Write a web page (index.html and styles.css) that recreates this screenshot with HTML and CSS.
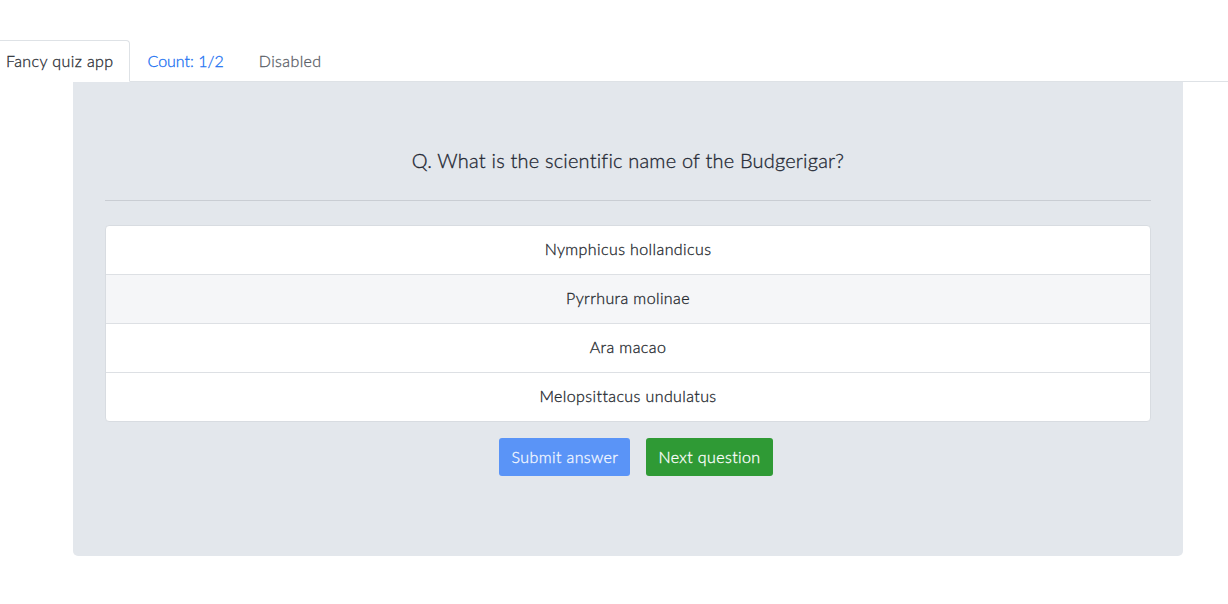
FILE: index.html
```html
<!DOCTYPE html>
<html>
<head>
<meta charset="utf-8">
<link rel="stylesheet" href="styles.css">
</head>
<body>
<ul class="tabs">
  <li class="tab active">Fancy quiz app</li>
  <li class="tab link">Count: 1/2</li>
  <li class="tab disabled">Disabled</li>
</ul>
<div class="jumbo">
  <h2 class="question">Q. What is the scientific name of the Budgerigar?</h2>
  <hr class="rule">
  <ul class="answers">
    <li class="answer">Nymphicus hollandicus</li>
    <li class="answer hover">Pyrrhura molinae</li>
    <li class="answer">Ara macao</li>
    <li class="answer">Melopsittacus undulatus</li>
  </ul>
  <div class="actions">
    <button class="btn btn-submit">Submit answer</button>
    <button class="btn btn-next">Next question</button>
  </div>
</div>
</body>
</html>
```

FILE: styles.css
```css
* { box-sizing: border-box; }
body {
  margin: 0;
  padding-top: 40px;
  font-family: Lato, "Open Sans", sans-serif;
  font-size: 16px;
  font-weight: 300;
  letter-spacing: 0.4px;
  -webkit-text-stroke: 0.3px currentColor;
  color: #212529;
  background: #fff;
}
.tabs {
  list-style: none;
  margin: 0 0 0 -11px;
  padding: 0;
  display: flex;
  border-bottom: 1px solid #dee2e6;
}
.tab {
  padding: 8px 16px;
  line-height: 24px;
  border: 1px solid transparent;
  border-top-left-radius: 4px;
  border-top-right-radius: 4px;
  margin-bottom: -1px;
}
.tab.active {
  color: #2a2e34;
  background: #fff;
  border-color: #dee2e6 #dee2e6 #fff;
}
.tab.link { color: #1a70f2; letter-spacing: 0; padding-right: 17px; }
.tab.disabled { color: #5a6067; }
.jumbo {
  margin-left: 73px;
  width: 1110px;
  background: #e3e7ec;
  border-radius: 0 0 5px 5px;
  padding: 64px 32px 80px;
}
.question {
  margin: 0;
  text-align: center;
  font-weight: 300;
  font-size: 20px;
  letter-spacing: 0.2px;
  line-height: 28px;
  padding-bottom: 2px;
  color: #1f2733;
}
.rule {
  margin: 24px 0;
  border: 0;
  border-top: 1px solid #c9cdd3;
}
.answers {
  list-style: none;
  margin: 0;
  padding: 0;
  background: #fff;
  border: 1px solid #d8dce1;
  border-radius: 4px;
}
.answer {
  text-align: center;
  padding: 11px 16px 13px;
  line-height: 24px;
  color: #24282e;
  border-top: 1px solid #dde0e4;
}
.answer:first-child { border-top: 0; }
.answer.hover { background: #f5f6f8; }
.actions {
  display: flex;
  justify-content: center;
  gap: 16px;
  margin-top: 16px;
  padding-left: 16px;
}
.btn {
  font-family: inherit;
  font-size: 16px;
  font-weight: 300;
  letter-spacing: 0.4px;
  -webkit-text-stroke: 0.3px currentColor;
  line-height: 24px;
  padding: 7px 12px;
  border: 0;
  border-radius: 3px;
  color: #fff;
}
.btn-submit { background: #5a94f7; color: #f4f8ff; }
.btn-next { background: #2f9a35; }
```
